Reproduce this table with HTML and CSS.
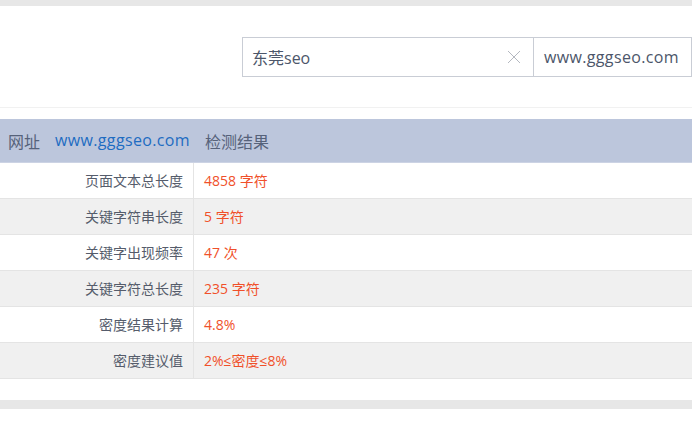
FILE: index.html
```html
<!DOCTYPE html>
<html lang="zh-CN">
<head>
<meta charset="utf-8">
<title>关键词密度检测</title>
<link rel="stylesheet" href="styles.css">
</head>
<body>
<div class="topbar"></div>
<div class="search-area">
  <div class="search">
    <div class="field keyword">
      <span class="field-text">东莞seo</span>
      <svg class="clear" width="14" height="14" viewBox="0 0 14 14"><path d="M1 1 L13 13 M13 1 L1 13" stroke="#b4b8c0" stroke-width="1" fill="none"/></svg>
    </div>
    <div class="field url">
      <span class="field-text latin">www.gggseo.com</span>
    </div>
  </div>
</div>
<div class="result">
  <div class="head">
    <div class="head-left"><span class="head-label">网址</span><span class="head-url latin">www.gggseo.com</span></div>
    <div class="head-right">检测结果</div>
  </div>
  <div class="row"><div class="label">页面文本总长度</div><div class="value">4858 字符</div></div>
  <div class="row alt"><div class="label">关键字符串长度</div><div class="value">5 字符</div></div>
  <div class="row"><div class="label">关键字出现频率</div><div class="value">47 次</div></div>
  <div class="row alt"><div class="label">关键字符总长度</div><div class="value">235 字符</div></div>
  <div class="row"><div class="label">密度结果计算</div><div class="value">4.8%</div></div>
  <div class="row alt"><div class="label">密度建议值</div><div class="value">2%≤密度≤8%</div></div>
</div>
<div class="bottombar"></div>
</body>
</html>
```
FILE: styles.css
```css
* { box-sizing: border-box; }
html, body { margin: 0; padding: 0; background: #fff; }
body {
  font-family: "Open Sans", "Noto Sans CJK SC", sans-serif;
  color: #555c6b;
  width: 692px;
  overflow: hidden;
}
.topbar { height: 6px; background: #e7e7e7; }
.search-area {
  height: 102px;
  padding: 31px 0 30px;
  border-bottom: 1px solid #f1f1f1;
  display: flex;
  justify-content: flex-end;
}
.search { display: flex; height: 40px; }
.field {
  height: 40px;
  border: 1px solid #c9cdd5;
  display: flex;
  align-items: center;
  font-size: 16px;
  color: #4c566a;
}
.latin { letter-spacing: 0.35px; }
.keyword { width: 292px; padding: 0 12px 0 9px; justify-content: space-between; }
.url { width: 158px; border-left: none; padding-left: 10px; }
.clear { display: block; }
.result { margin-top: 11px; }
.head {
  height: 44px;
  background: #bcc6dc;
  display: flex;
  align-items: center;
  font-size: 16px;
  border-bottom: 1px solid #ccd3e4;
}
.head-left { width: 193px; padding-left: 8px; display: flex; gap: 15px; }
.head-label { color: #56627a; }
.head-url { color: #1e6cc2; }
.head-right { padding-left: 12px; color: #56627a; }
.row {
  height: 36px;
  display: flex;
  border-bottom: 1px solid #e4e4e4;
  font-size: 14px;
}
.row.alt { background: #f0f0f0; }
.label {
  width: 194px;
  text-align: right;
  padding-right: 10px;
  border-right: 1px solid #e4e4e4;
  line-height: 35px;
  color: #555c6b;
}
.value { padding-left: 10px; line-height: 35px; color: #f0502a; }
.bottombar { margin-top: 21px; height: 9px; background: #e7e7e7; }
```
